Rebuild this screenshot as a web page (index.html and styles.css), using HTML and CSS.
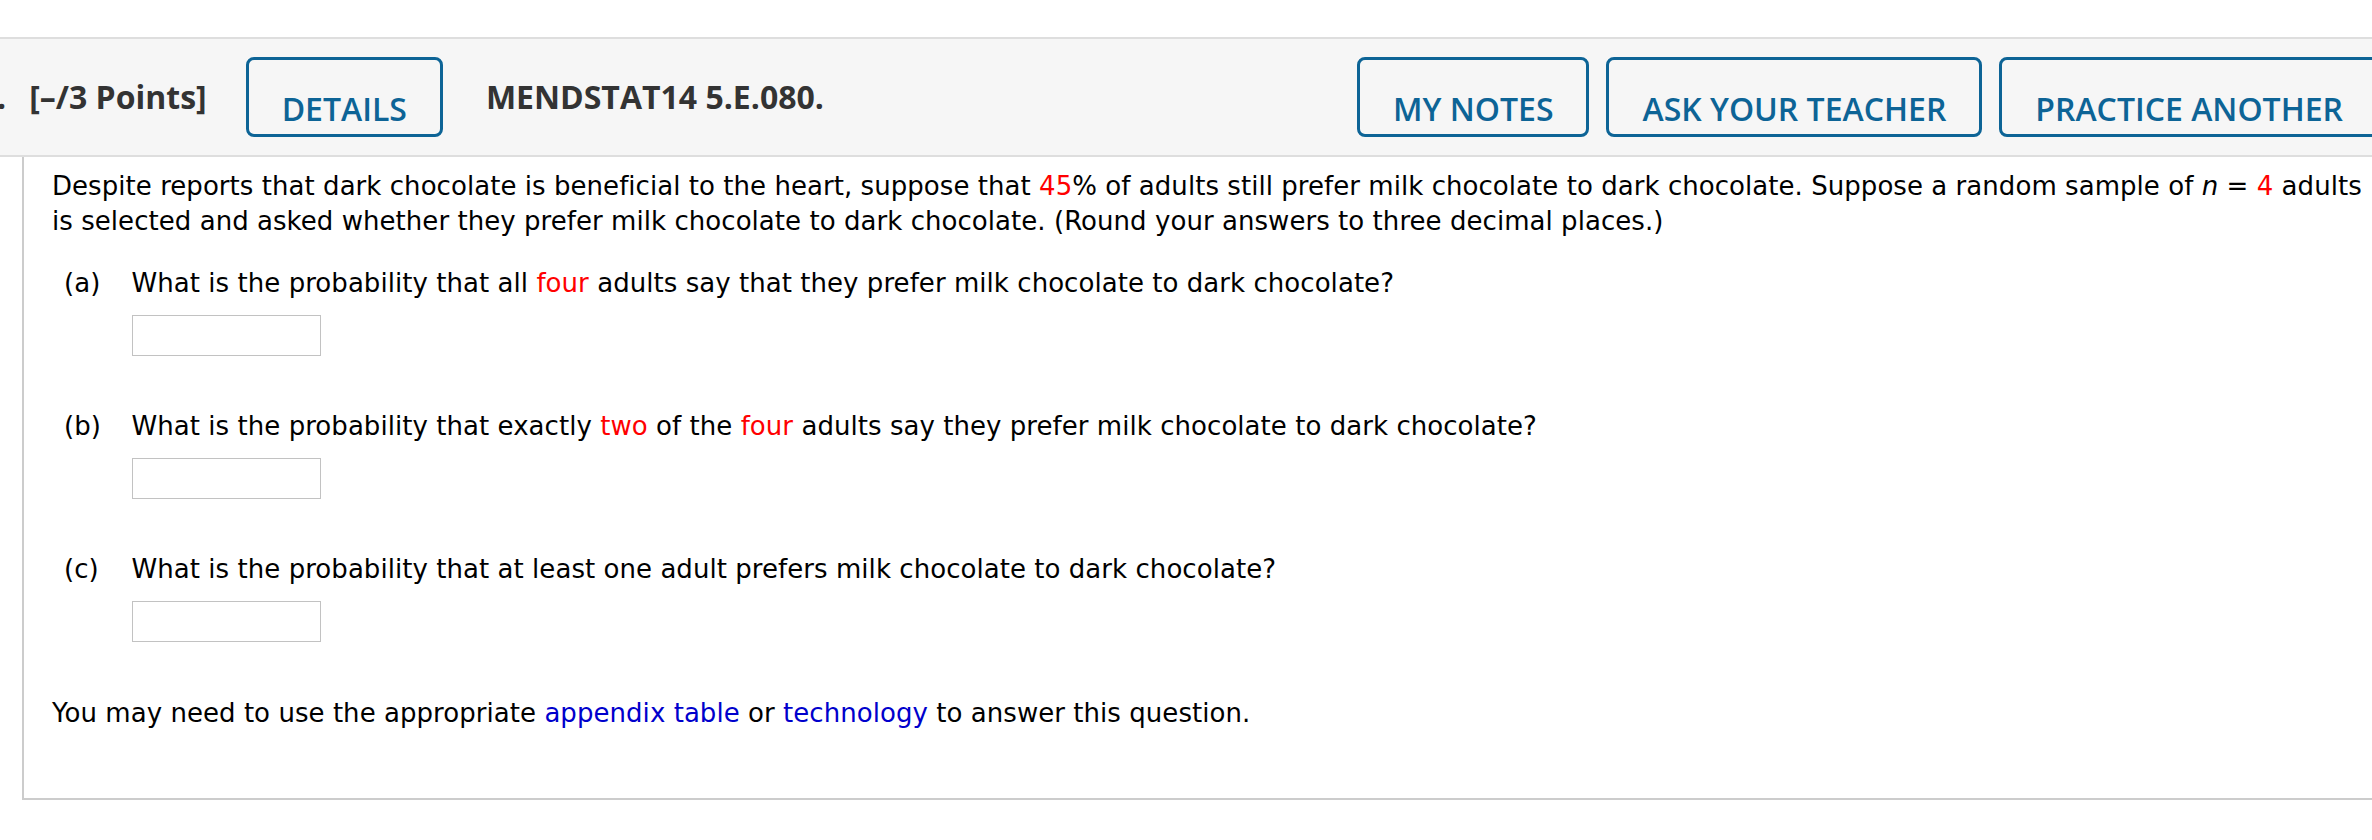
FILE: index.html
```html
<!DOCTYPE html>
<html lang="en">
<head>
<meta charset="utf-8">
<title>MENDSTAT14 5.E.080.</title>
<link rel="stylesheet" href="styles.css">
</head>
<body>
<div class="page">
  <header class="qhead">
    <div class="qleft">
      <span class="qnum">.</span>
      <span class="qpts">[&ndash;/3 Points]</span>
      <button class="btn btn-details" type="button">DETAILS</button>
      <span class="qid">MENDSTAT14 5.E.080.</span>
    </div>
    <div class="qright">
      <button class="btn" type="button">MY NOTES</button>
      <button class="btn" type="button">ASK YOUR TEACHER</button>
      <button class="btn" type="button">PRACTICE ANOTHER</button>
    </div>
  </header>
  <section class="qbody">
    <p class="stem">Despite reports that dark chocolate is beneficial to the heart, suppose that <span class="red">45</span>% of adults still prefer milk chocolate to dark chocolate. Suppose a random sample of <i>n</i> = <span class="red">4</span> adults is selected and asked whether they prefer milk chocolate to dark chocolate. (Round your answers to three decimal places.)</p>
    <div class="part part-first">
      <span class="plabel">(a)</span>
      <div class="pcontent">
        <div class="ptext">What is the probability that all <span class="red">four</span> adults say that they prefer milk chocolate to dark chocolate?</div>
        <span class="answer"></span>
      </div>
    </div>
    <div class="part">
      <span class="plabel">(b)</span>
      <div class="pcontent">
        <div class="ptext">What is the probability that exactly <span class="red">two</span> of the <span class="red">four</span> adults say they prefer milk chocolate to dark chocolate?</div>
        <span class="answer"></span>
      </div>
    </div>
    <div class="part">
      <span class="plabel">(c)</span>
      <div class="pcontent">
        <div class="ptext">What is the probability that at least one adult prefers milk chocolate to dark chocolate?</div>
        <span class="answer"></span>
      </div>
    </div>
    <p class="note">You may need to use the appropriate <a class="link" href="#">appendix table</a> or <a class="link" href="#">technology</a> to answer this question.</p>
  </section>
</div>
</body>
</html>
```

FILE: styles.css
```css
html, body {
  margin: 0;
  padding: 0;
  overflow: hidden;
  background: #ffffff;
}

.page {
  width: 2420px;
  padding-top: 37px;
}

.qhead {
  display: flex;
  align-items: center;
  width: 2379px;
  box-sizing: border-box;
  background: #f6f6f6;
  border-top: 2px solid #dedede;
  border-bottom: 2px solid #dedede;
  padding: 18px 0;
  font-family: "Open Sans", "Liberation Sans", sans-serif;
  color: #333333;
}

.qleft,
.qright {
  display: flex;
  align-items: center;
}

.qright {
  margin-left: auto;
  gap: 17px;
}

.qnum,
.qpts,
.qid {
  font-size: 32px;
  font-weight: 700;
  line-height: 44px;
  white-space: nowrap;
}

.qnum {
  margin-left: -3px;
}

.qpts {
  margin-left: 23px;
}

.qid {
  margin-left: 43px;
}

.btn {
  font-family: "Open Sans", "Liberation Sans", sans-serif;
  font-size: 32px;
  font-weight: 600;
  line-height: 44px;
  color: #0d6496;
  background: transparent;
  border: 3px solid #0d6496;
  border-radius: 8px;
  padding: 27px 33px 3px;
  height: 80px;
  box-sizing: border-box;
  margin: 0;
  white-space: nowrap;
  cursor: pointer;
}

.btn.btn-details {
  margin-left: 39px;
}

.qbody {
  margin-left: 22px;
  border-left: 2px solid #cccccc;
  border-bottom: 2px solid #cccccc;
  padding: 12px 0 67px 28px;
  font-family: "DejaVu Sans", Verdana, sans-serif;
  font-size: 26px;
  line-height: 35px;
  letter-spacing: 0.05px;
  color: #000000;
}

.stem {
  margin: 0;
  width: 2325px;
}

.red {
  color: #ff0000;
}

.part {
  display: grid;
  grid-template-columns: 67.5px auto;
  margin: 53px 0 0 12px;
}

.part-first {
  margin-top: 27px;
}

.pcontent {
  display: flex;
  flex-direction: column;
  align-items: flex-start;
}

.answer {
  display: block;
  width: 189px;
  height: 41px;
  box-sizing: border-box;
  margin-top: 14px;
  border: 1px solid #c2c2c2;
  background: #ffffff;
}

.note {
  margin: 54px 0 0;
}

.link {
  color: #0000cc;
  text-decoration: none;
}
```
